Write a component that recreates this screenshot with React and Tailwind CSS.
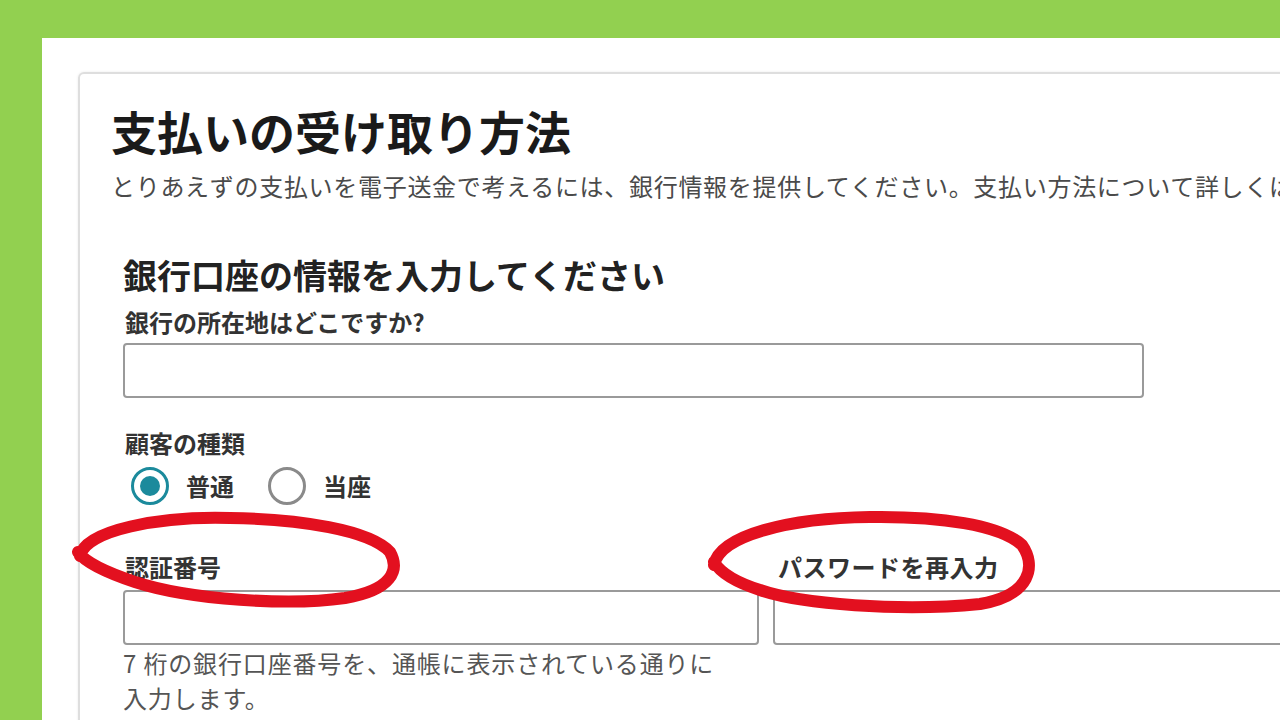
import React from "react";

const font = { fontFamily: '"Noto Sans CJK JP", "Noto Sans", sans-serif' };

function Radio({ checked, label }) {
  return (
    <label className="flex items-center">
      <span
        className={`flex h-[38px] w-[38px] items-center justify-center rounded-full border-[3px] ${
          checked ? "border-[#1b8a9c]" : "border-[#8a8a8a]"
        }`}
      >
        {checked && <span className="h-[20px] w-[20px] rounded-full bg-[#1b8a9c]" />}
      </span>
      <span className="ml-[17px] text-[24px] font-bold leading-[30px] text-[#333]">{label}</span>
    </label>
  );
}

export default function App() {
  return (
    <div className="relative h-[720px] w-[1280px] overflow-hidden bg-[#92d050]" style={font}>
      <div className="ml-[42px] mt-[38px] h-[682px] bg-white pl-[36px] pt-[34px]">
        {/* card */}
        <div className="h-[700px] w-[1300px] rounded-tl-md border-2 border-[#dedede] shadow-[0_0_3px_rgba(0,0,0,0.08)]">
          <div className="pl-[31px] pt-[34px]">
            <h1 className="text-[46px] font-bold leading-[45px] text-[#1a1a1a]">支払いの受け取り方法</h1>
            <p className="mt-[18px] whitespace-nowrap text-[24px] leading-[30px] tracking-[0.7px] text-[#4a4a4a]">
              とりあえずの支払いを電子送金で考えるには、銀行情報を提供してください。支払い方法について詳しくは
            </p>
          </div>

          <div className="pl-[43px]">
            <h2 className="mt-[54px] text-[34px] font-bold leading-[40px] text-[#222]">
              銀行口座の情報を入力してください
            </h2>

            <div className="mt-[12px] pl-[2px] text-[24px] font-bold leading-[30px] text-[#333]">
              銀行の所在地はどこですか?
            </div>
            <div className="mt-[6px] h-[55px] w-[1021px] rounded border-2 border-[#9a9a9a]" />

            <div className="mt-[30px] pl-[2px] text-[24px] font-bold leading-[30px] text-[#333]">顧客の種類</div>
            <div className="mt-[8px] flex h-[40px] items-center pl-[8px]">
              <Radio checked label="普通" />
              <div className="ml-[34px]">
                <Radio label="当座" />
              </div>
            </div>

            <div className="mt-[46px] grid grid-cols-[636px_636px] gap-x-[14px]">
              <div className="pl-[2px] text-[24px] font-bold leading-[30px] text-[#333]">認証番号</div>
              <div className="pl-[5px] text-[24px] font-bold leading-[30px] tracking-[0.5px] text-[#333]">
                パスワードを再入力
              </div>
              <div className="mt-[8px] h-[55px] rounded border-2 border-[#9a9a9a]" />
              <div className="mt-[8px] h-[55px] rounded border-2 border-[#9a9a9a]" />
              <p className="w-[610px] text-[24px] leading-[35px] tracking-[0.85px] text-[#555]">
                7 桁の銀行口座番号を、通帳に表示されている通りに入力します。
              </p>
            </div>
          </div>
        </div>
      </div>

      {/* red hand-drawn annotations */}
      <svg className="pointer-events-none absolute inset-0" width="1280" height="720" viewBox="0 0 1280 720">
        <path
          d="M 80 556 C 85 530, 160 516, 230 518 C 300 519, 370 530, 390 552 C 400 570, 392 590, 345 598 C 290 606, 190 600, 135 582 C 105 572, 85 562, 78 552"
          fill="none"
          stroke="#e3101f"
          strokeWidth="12"
          strokeLinecap="round"
          strokeLinejoin="round"
        />
        <path
          d="M 714 565 C 720 535, 790 518, 870 517 C 940 516, 1000 525, 1022 545 C 1036 565, 1032 595, 980 604 C 900 612, 800 604, 760 590 C 735 582, 720 572, 714 562"
          fill="none"
          stroke="#e3101f"
          strokeWidth="12"
          strokeLinecap="round"
          strokeLinejoin="round"
        />
      </svg>
    </div>
  );
}
